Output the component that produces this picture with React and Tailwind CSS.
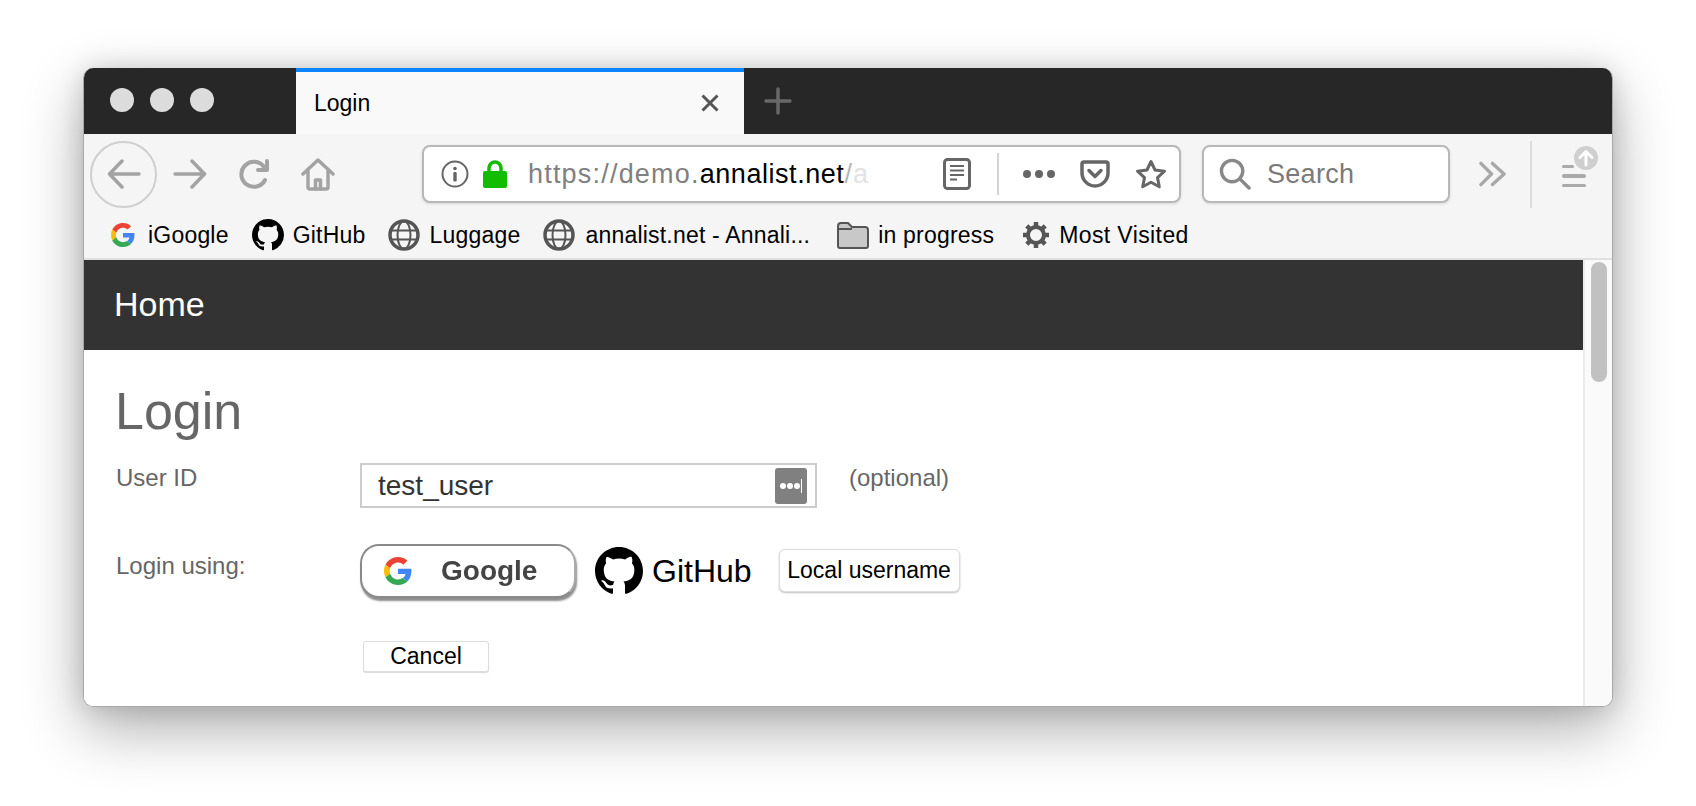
import React from 'react';

const GITHUB_PATH = "M8 0C3.58 0 0 3.58 0 8c0 3.54 2.29 6.53 5.47 7.59.4.07.55-.17.55-.38 0-.19-.01-.82-.01-1.49-2.01.37-2.53-.49-2.69-.94-.09-.23-.48-.94-.82-1.13-.28-.15-.68-.52-.01-.53.63-.01 1.08.58 1.23.82.72 1.21 1.87.87 2.33.66.07-.52.28-.87.51-1.07-1.78-.2-3.64-.89-3.64-3.95 0-.87.31-1.59.82-2.15-.08-.2-.36-1.02.08-2.12 0 0 .67-.21 2.2.82.64-.18 1.32-.27 2-.27.68 0 1.36.09 2 .27 1.53-1.04 2.2-.82 2.2-.82.44 1.1.16 1.92.08 2.12.51.56.82 1.27.82 2.15 0 3.07-1.87 3.75-3.65 3.95.29.25.54.73.54 1.48 0 1.07-.01 1.93-.01 2.2 0 .21.15.46.55.38A8.013 8.013 0 0016 8c0-4.42-3.58-8-8-8z";

const GoogleG = ({ size }) => (
    <svg width={size} height={size} viewBox="0 0 48 48" className="shrink-0">
        <path fill="#EA4335" d="M24 9.5c3.54 0 6.71 1.22 9.21 3.6l6.85-6.85C35.9 2.38 30.47 0 24 0 14.62 0 6.51 5.38 2.56 13.22l7.98 6.19C12.43 13.72 17.74 9.5 24 9.5z" />
        <path fill="#4285F4" d="M46.98 24.55c0-1.57-.15-3.09-.38-4.55H24v9.02h12.94c-.58 2.96-2.26 5.48-4.78 7.18l7.73 6c4.51-4.18 7.09-10.36 7.09-17.65z" />
        <path fill="#FBBC05" d="M10.53 28.59c-.48-1.45-.76-2.99-.76-4.59s.27-3.14.76-4.59l-7.98-6.19C.92 16.46 0 20.12 0 24c0 3.88.92 7.54 2.56 10.78l7.97-6.19z" />
        <path fill="#34A853" d="M24 48c6.48 0 11.93-2.13 15.89-5.81l-7.73-6c-2.15 1.45-4.92 2.3-8.16 2.3-6.26 0-11.57-4.22-13.47-9.91l-7.98 6.19C6.51 42.62 14.62 48 24 48z" />
    </svg>
);

const GithubMark = ({ size, className = "" }) => (
    <svg width={size} height={size} viewBox="0 0 16 16" className={`shrink-0 ${className}`}>
        <path fill="#000" fillRule="evenodd" d={GITHUB_PATH} />
    </svg>
);

const Globe = () => (
    <svg width="32" height="32" viewBox="0 0 32 32" fill="none" stroke="#555" className="shrink-0">
        <circle cx="16" cy="16" r="14" strokeWidth="3.5" />
        <ellipse cx="16" cy="16" rx="6.5" ry="14" strokeWidth="2" />
        <path d="M3 11.5h26M3 20.5h26" strokeWidth="2" />
    </svg>
);

const Bookmark = ({ icon, label, className, track = "tracking-[0.2px]" }) => (
    <div className={`flex items-center ${className}`}>
        {icon}
        <span className={`text-[23px] text-black whitespace-nowrap ${track}`}>{label}</span>
    </div>
);

const TabStrip = () => (
    <div className="flex h-[66px] bg-[#272727]">
        <div className="flex w-[212px] items-center gap-4 pl-[26px] pb-[2px]">
            <div className="h-6 w-6 rounded-full bg-[#dcdcdc]"></div>
            <div className="h-6 w-6 rounded-full bg-[#dcdcdc]"></div>
            <div className="h-6 w-6 rounded-full bg-[#dcdcdc]"></div>
        </div>
        <div className="flex w-[448px] items-center justify-between border-t-4 border-[#0a84ff] bg-[#f9f9f9] pl-[18px] pr-[24px]">
            <span className="text-[23px] text-black">Login</span>
            <svg width="20" height="20" viewBox="0 0 20 20" stroke="#555" strokeWidth="3">
                <path d="M2.5 2.5l15 15M17.5 2.5l-15 15" />
            </svg>
        </div>
        <div className="flex items-center pl-[20px]">
            <svg width="28" height="28" viewBox="0 0 28 28" stroke="#686868" strokeWidth="3.5" strokeLinecap="round">
                <path d="M14 2v24M2 14h24" />
            </svg>
        </div>
    </div>
);

const Toolbar = () => (
    <div className="flex h-[74px] items-center bg-[#f5f5f5] pl-[6px] pt-[6px]">
        {/* back */}
        <div className="flex h-[67px] w-[67px] items-center justify-center rounded-full border-2 border-[#cfcfcf]">
            <svg width="34" height="30" viewBox="0 0 34 30" fill="none" stroke="#a3a3a3" strokeWidth="3.5" strokeLinecap="round" strokeLinejoin="round">
                <path d="M32 15H3M15 2L2.500 15 15 28" />
            </svg>
        </div>
        {/* forward */}
        <svg width="34" height="30" viewBox="0 0 34 30" fill="none" stroke="#a3a3a3" strokeWidth="3.5" strokeLinecap="round" strokeLinejoin="round" className="ml-[16px]">
            <path d="M2 15h29M19 2l12.500 13L19 28" />
        </svg>
        {/* reload */}
        <svg width="32" height="30" viewBox="0 0 32 30" fill="none" stroke="#a3a3a3" strokeWidth="4" strokeLinecap="round" strokeLinejoin="round" className="ml-[31px]">
            <path d="M27 21a12.500 12.500 0 1 1-1-13" />
            <path d="M29 2v9h-9" />
        </svg>
        {/* home */}
        <svg width="34" height="34" viewBox="0 0 34 34" fill="none" stroke="#a3a3a3" strokeWidth="3.5" strokeLinecap="round" strokeLinejoin="round" className="ml-[31px]">
            <path d="M2 17L17 3l15 14" />
            <path d="M7 14v16a2 2 0 0 0 2 2h16a2 2 0 0 0 2-2V14" />
            <path d="M14.500 32V23h5v9" />
        </svg>

        {/* url bar */}
        <div className="ml-[87px] flex h-[58px] w-[759px] items-center rounded-lg border-2 border-[#b8b8b8] bg-white pl-[17px] shadow-[0_1px_3px_rgba(0,0,0,0.12)]">
            <svg width="28" height="28" viewBox="0 0 28 28" className="shrink-0">
                <circle cx="14" cy="14" r="12.500" fill="none" stroke="#666" strokeWidth="2" />
                <circle cx="14" cy="8.500" r="1.800" fill="#666" />
                <rect x="12.300" y="12" width="3.400" height="9.500" rx="1" fill="#666" />
            </svg>
            <svg width="24" height="28" viewBox="0 0 24 28" className="ml-[14px] shrink-0">
                <path d="M6 12V8a6 6 0 0 1 12 0v4" fill="none" stroke="#12bc00" strokeWidth="3.500" />
                <rect x="0" y="11" width="24" height="17" rx="2" fill="#12bc00" />
            </svg>
            <div className="ml-[21px] w-[344px] overflow-hidden whitespace-nowrap text-[27px] tracking-[1.2px] text-[#808080]">
                https://demo.<span className="tracking-[0.55px] text-black">annalist.net</span><span className="text-[#b5b5b5]">/</span><span className="text-[#e2e2e2]">a</span>
            </div>
            <svg width="28" height="32" viewBox="0 0 28 32" fill="none" stroke="#666" className="ml-[71px] shrink-0">
                <rect x="1.500" y="1.500" width="25" height="29" rx="3" strokeWidth="3" />
                <path d="M7 8h14M7 12.500h14M7 17h14M7 21.500h7" strokeWidth="2" />
            </svg>
            <div className="ml-[26px] h-[42px] w-[2px] bg-[#d4d4d4]"></div>
            <div className="ml-[24px] flex gap-[4px]">
                <div className="h-[8px] w-[8px] rounded-full bg-[#666]"></div>
                <div className="h-[8px] w-[8px] rounded-full bg-[#666]"></div>
                <div className="h-[8px] w-[8px] rounded-full bg-[#666]"></div>
            </div>
            <svg width="30" height="28" viewBox="0 0 30 28" fill="none" stroke="#666" strokeWidth="3.500" strokeLinecap="round" strokeLinejoin="round" className="ml-[25px] shrink-0">
                <path d="M4 2h22a2 2 0 0 1 2 2v9c0 7-6 13-13 13S2 20 2 13V4a2 2 0 0 1 2-2z" />
                <path d="M9 10.500l6 6 6-6" />
            </svg>
            <svg width="32" height="30" viewBox="0 0 32 30" fill="none" stroke="#666" strokeWidth="3" strokeLinejoin="round" className="ml-[25px] shrink-0">
                <path d="M16 2.500l4 8.500 9.500 1.200-7 6.400 1.800 9.200L16 23.200l-8.300 4.600 1.800-9.200-7-6.400L12 11z" />
            </svg>
        </div>

        {/* search */}
        <div className="ml-[21px] flex h-[58px] w-[248px] items-center rounded-lg border-2 border-[#b8b8b8] bg-white pl-[15px] shadow-[0_1px_3px_rgba(0,0,0,0.12)]">
            <svg width="32" height="32" viewBox="0 0 33 33" fill="none" stroke="#888" strokeWidth="3.500" strokeLinecap="round" className="shrink-0">
                <circle cx="13.500" cy="13.500" r="11" />
                <path d="M21.500 21.500l9.500 9.500" />
            </svg>
            <span className="ml-[16px] text-[27px] tracking-[0.3px] text-[#7a7a7a]">Search</span>
        </div>

        <svg width="27" height="26" viewBox="0 0 28 26" fill="none" stroke="#a8a8a8" strokeWidth="3.500" strokeLinecap="round" strokeLinejoin="round" className="ml-[29px] shrink-0">
            <path d="M2 2l11 11L2 24M14 2l12 11-12 11" />
        </svg>
        <div className="ml-[24px] h-[67px] w-[2px] bg-[#dcdcdc]"></div>

        <div className="relative ml-[30px] flex w-[24px] flex-col gap-[6px] pt-[4px]">
            <div className="h-[3.500px] w-[12px] rounded bg-[#aaa]"></div>
            <div className="h-[3.500px] w-[24px] rounded bg-[#aaa]"></div>
            <div className="h-[3.500px] w-[24px] rounded bg-[#aaa]"></div>
            <svg width="24" height="24" viewBox="0 0 24 24" className="absolute left-[12px] top-[-15px]">
                <circle cx="12" cy="12" r="12" fill="#cfcfcf" />
                <path d="M12 19V6M6 11.500L12 5.500l6 6" fill="none" stroke="#fff" strokeWidth="3" strokeLinecap="round" strokeLinejoin="round" />
            </svg>
        </div>
    </div>
);

const BookmarksBar = () => (
    <div className="flex h-[52px] items-center border-b-2 border-[#e0e0e0] bg-[#f5f5f5] pt-[4px] pl-[27px]">
        <Bookmark className="gap-[13px]" icon={<GoogleG size={24} />} label="iGoogle" />
        <Bookmark className="ml-[23px] gap-[9px]" icon={<GithubMark size={32} />} label="GitHub" />
        <Bookmark className="ml-[23px] gap-[9px]" icon={<Globe />} label="Luggage" />
        <Bookmark className="ml-[23px] gap-[10px]" icon={<Globe />} label="annalist.net - Annali..." />
        <Bookmark
            className="ml-[27px] gap-[9px]"
            icon={
                <svg width="32" height="28" viewBox="0 0 32 28" stroke="#555" strokeWidth="2" className="shrink-0">
                    <path d="M1 5a3 3 0 0 1 3-3h7l4 4h13a3 3 0 0 1 3 3v16a2 2 0 0 1-2 2H3a2 2 0 0 1-2-2z" fill="#c8c8c8" />
                    <path d="M1 8h14" fill="none" />
                </svg>
            }
            label="in progress"
        />
        <Bookmark
            className="ml-[28px] gap-[9px]"
            track="tracking-[0.4px]"
            icon={
                <svg width="28" height="28" viewBox="0 0 28 28" fill="none" stroke="#555" className="shrink-0">
                    <circle cx="14" cy="14" r="8" strokeWidth="4" />
                    <path d="M14 1v6M14 21v6M1 14h6M21 14h6M4.800 4.800l4.200 4.200M19 19l4.200 4.200M23.200 4.800L19 9M9 19l-4.200 4.200" strokeWidth="4.500" />
                </svg>
            }
            label="Most Visited"
        />
    </div>
);

const Page = () => (
    <div className="flex min-h-0 flex-1">
        <div className="flex-1 bg-white">
            <div className="flex h-[90px] items-center bg-[#333333] pb-[2px] pl-[30px]">
                <a className="text-[34px] text-white">Home</a>
            </div>
            <div className="pl-[31px] pt-[30px]">
                <h1 className="text-[52px] leading-[62px] text-[#666666]">Login</h1>

                <div className="mt-[21px] flex">
                    <label className="w-[245px] pl-[1px] text-[24px] leading-[30px] text-[#666666]">User ID</label>
                    <div className="flex h-[45px] w-[457px] items-center justify-between border-2 border-[#cccccc] pl-[16px] pr-[8px]">
                        <span className="text-[28px] text-[#333]">test_user</span>
                        <div className="flex h-[36px] w-[32px] items-center justify-center gap-[1px] rounded-[3px] bg-[#808080]">
                            <div className="h-[6px] w-[6px] rounded-full bg-white"></div>
                            <div className="h-[6px] w-[6px] rounded-full bg-white"></div>
                            <div className="h-[6px] w-[6px] rounded-full bg-white"></div>
                            <div className="h-[14px] w-[1px] bg-white"></div>
                        </div>
                    </div>
                    <span className="ml-[32px] text-[24px] leading-[30px] text-[#666666]">(optional)</span>
                </div>

                <div className="mt-[36px] flex">
                    <label className="w-[245px] pl-[1px] pt-[7px] text-[24px] leading-[30px] text-[#666666]">Login using:</label>
                    <div className="flex items-center">
                        <div className="flex h-[54px] w-[216px] items-center rounded-[19px] border-2 border-[#8a8a8a] border-r-[#aaa] bg-white pl-[22px] shadow-[1px_3px_2px_rgba(0,0,0,0.45)] blur-[0.5px]">
                            <GoogleG size={28} />
                            <span className="ml-[29px] text-[28px] font-bold text-[#444]">Google</span>
                        </div>
                        <GithubMark size={48} className="ml-[19px]" />
                        <span className="ml-[9px] text-[32px] text-black">GitHub</span>
                        <button className="ml-[27px] mb-[2px] h-[43px] w-[181px] rounded-[6px] border border-[#dddddd] bg-white text-[23px] text-black shadow-[0_1px_2px_rgba(0,0,0,0.25)]">
                            Local username
                        </button>
                    </div>
                </div>

                <button className="ml-[248px] mt-[43px] block h-[31px] w-[126px] rounded-[3px] border border-[#dddddd] bg-white text-[23px] leading-none text-black shadow-[0_1px_1px_rgba(0,0,0,0.15)]">
                    Cancel
                </button>
            </div>
        </div>
        <div className="w-[29px] border-l-2 border-[#ececec] bg-[#fafafa] pl-[6px] pt-[2px]">
            <div className="h-[120px] w-[16px] rounded-full bg-[#c1c1c1]"></div>
        </div>
    </div>
);

const App = () => {
    return (
        <div className="h-[806px] w-[1696px] overflow-hidden bg-white pl-[83px] pt-[68px] font-['Liberation_Sans',Arial,sans-serif]">
            <div className="flex h-[639px] w-[1530px] flex-col overflow-hidden rounded-[10px] border-x border-b border-[#a8a8a8] shadow-[0_22px_60px_rgba(0,0,0,0.32),0_0_24px_rgba(0,0,0,0.14)]">
                <TabStrip />
                <Toolbar />
                <BookmarksBar />
                <Page />
            </div>
        </div>
    );
};

export default App;
